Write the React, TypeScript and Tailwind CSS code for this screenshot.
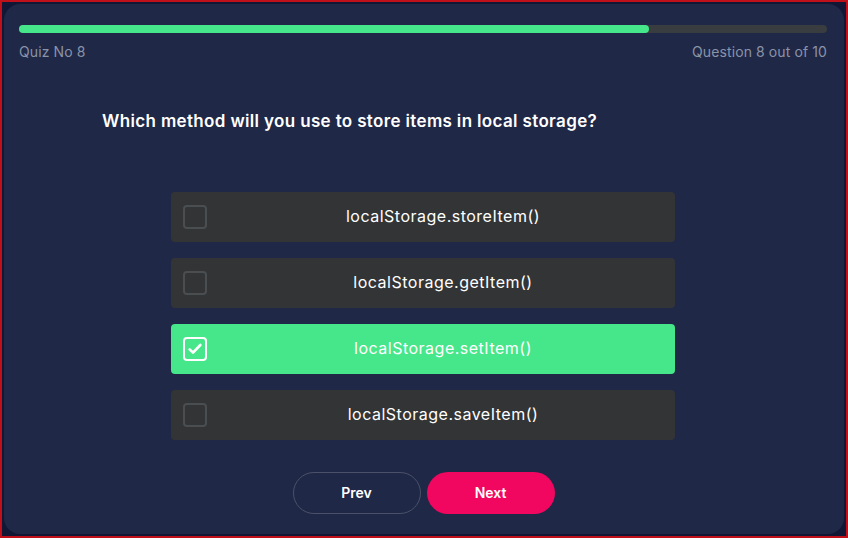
import { useState } from "react";

const options = [
  "localStorage.storeItem()",
  "localStorage.getItem()",
  "localStorage.setItem()",
  "localStorage.saveItem()",
];

export default function App() {
  const [picked, setPicked] = useState(2);

  return (
    <div
      className="h-[538px] w-[848px] overflow-hidden border-2 border-[#c0101a] bg-[#111735] p-[2px]"
      style={{ fontFamily: "Inter, 'Open Sans', sans-serif" }}
    >
      <div className="flex h-full flex-col rounded-[16px] bg-[#1f2847] pl-[15px] pr-[17px] pt-[21px]">
        {/* progress */}
        <div className="h-[8px] w-full rounded-full bg-[#393d3f]">
          <div className="h-full w-[78%] rounded-full bg-[#46e68a]" />
        </div>
        <div className="mt-[8px] flex justify-between text-[14px] tracking-[0.1px] text-[#8a93a8]">
          <span>Quiz No 8</span>
          <span>Question 8 out of 10</span>
        </div>

        <h1 className="mt-[47px] pl-[83px] text-[17px] font-semibold tracking-[0.35px] text-white">
          Which method will you use to store items in local storage?
        </h1>

        <div className="mx-auto mt-[57px] flex w-[504px] flex-col gap-[16px]">
          {options.map((opt, i) => {
            const on = picked === i;
            return (
              <button
                key={opt}
                onClick={() => setPicked(i)}
                className={
                  "flex h-[50px] items-center rounded-[4px] pl-[12px] text-[16px] tracking-[0.5px] text-white " +
                  (on ? "bg-[#46e68a]" : "bg-[#323436]")
                }
              >
                <span
                  className={
                    "flex h-[24px] w-[24px] shrink-0 items-center justify-center rounded-[4px] border-2 " +
                    (on ? "border-white" : "border-[#4b4e51]")
                  }
                >
                  {on && (
                    <svg width="16" height="16" viewBox="0 0 24 24" fill="none" stroke="white" strokeWidth="4" strokeLinecap="round" strokeLinejoin="round">
                      <path d="M4 12.5l5 5L20 6" />
                    </svg>
                  )}
                </span>
                <span className="ml-[4px] flex-1 pb-[2px] text-center">{opt}</span>
              </button>
            );
          })}
        </div>

        <div className="mt-[32px] flex justify-center gap-[6px] pl-[1px]">
          <button className="h-[42px] w-[128px] rounded-full border border-[#4a5168] text-[14px] font-semibold text-white">
            Prev
          </button>
          <button className="h-[42px] w-[128px] rounded-full bg-[#f1075f] text-[14px] font-semibold text-white">
            Next
          </button>
        </div>
      </div>
    </div>
  );
}
